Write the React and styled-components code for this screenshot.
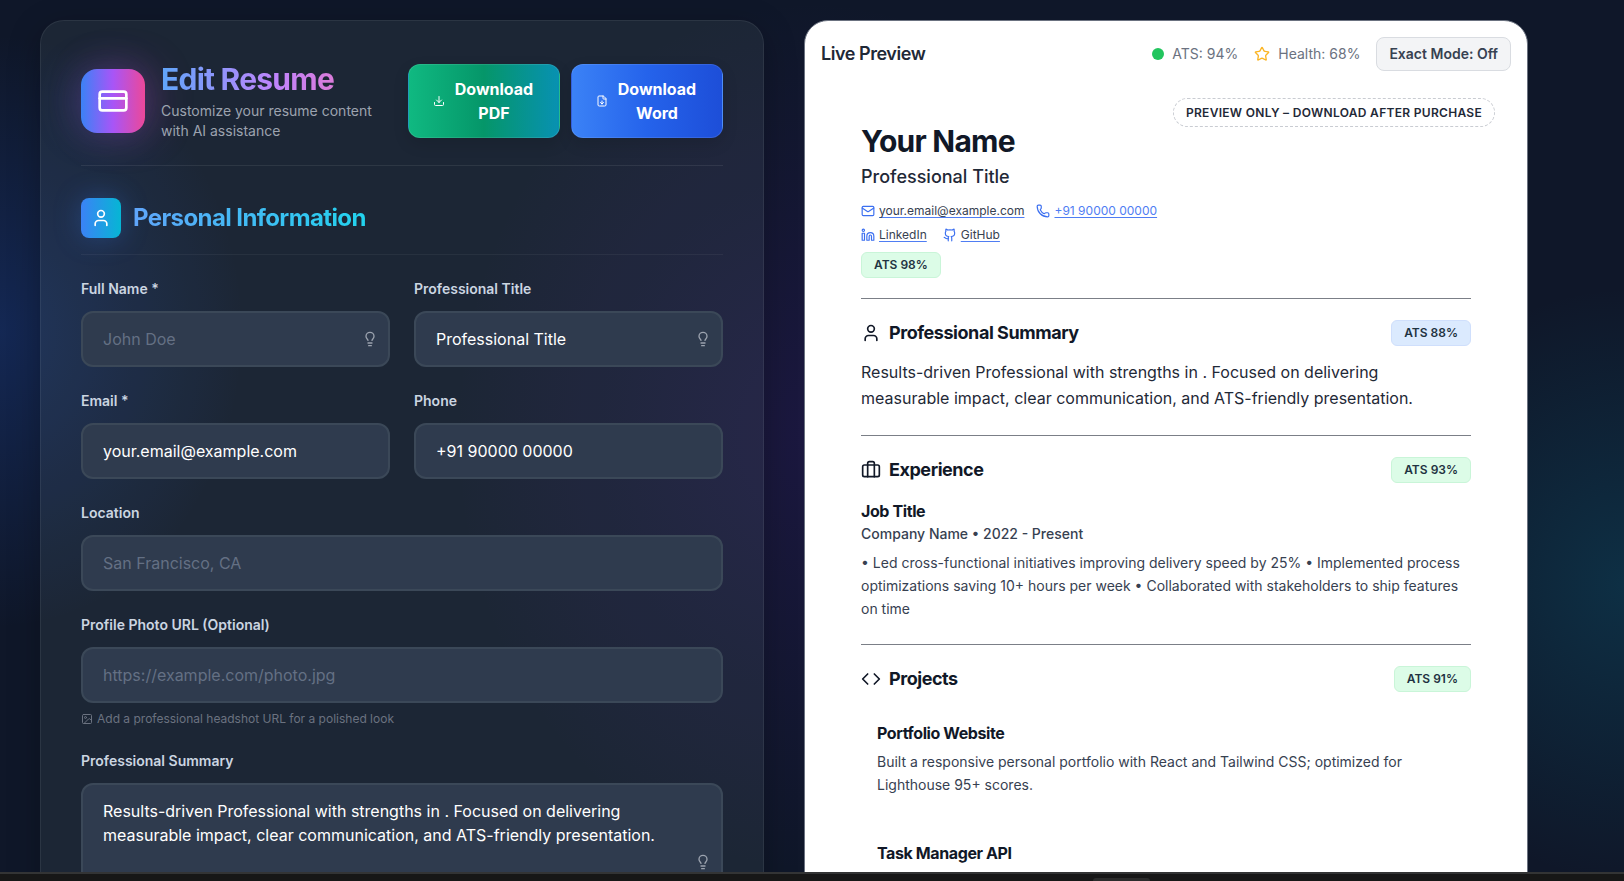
import React from 'react';
import styled, { createGlobalStyle, css } from 'styled-components';
import {
  Briefcase, Code, CreditCard, Download, FileDown, Github, Image, Lightbulb,
  Linkedin, Mail, Phone, Star, User,
} from 'lucide-react';

const GlobalStyle = createGlobalStyle`
  *, *::before, *::after { box-sizing: border-box; }
  body { margin: 0; background: #0f172a; font-family: Inter, "Liberation Sans", sans-serif; }
  h1, h2, h3, p { margin: 0; }
  button, input, textarea { font: inherit; }
  svg { flex: none; display: block; }
`;

const Shell = styled.div`
  display: flex;
  flex-direction: column;
  height: 100vh;
`;

const Page = styled.main`
  flex: 1;
  min-height: 0;
  overflow: hidden;
  display: grid;
  grid-template-columns: 1fr 1fr;
  gap: 40px;
  align-items: start;
  padding: 20px 96px 0 40px;
  background:
    radial-gradient(ellipse 15% 34% at 0% 38%, rgba(37, 99, 235, 0.22), transparent),
    radial-gradient(ellipse 22% 50% at 50% 50%, rgba(88, 28, 175, 0.17), transparent),
    radial-gradient(ellipse 16% 34% at 100% 67%, rgba(8, 145, 178, 0.2), transparent),
    #0f1729;
`;

const Dock = styled.footer`
  height: 9px;
  border-top: 2px solid #333435;
  background: #171717;
  display: flex;
  align-items: flex-end;
  padding-left: 1093px;
`;

const DockHandle = styled.span`
  width: 57px;
  height: 3px;
  border-radius: 4px 4px 0 0;
  background: #2b2b2b;
`;

const EditorCard = styled.section`
  padding: 40px;
  border: 1px solid rgba(255, 255, 255, 0.07);
  border-radius: 24px;
  background: rgba(145, 180, 165, 0.1);
  box-shadow: 0 8px 32px rgba(0, 0, 0, 0.25);
`;

const EditorHeader = styled.header`
  display: flex;
  align-items: center;
  gap: 16px;
  padding-bottom: 24px;
  margin-bottom: 32px;
  border-bottom: 1px solid rgba(255, 255, 255, 0.08);
`;

const IconTile = styled.div`
  flex: none;
  display: grid;
  place-items: center;
  color: #fff;
  ${(p) => (p.$large ? css`
    width: 64px;
    height: 64px;
    border-radius: 16px;
    background: linear-gradient(90deg, #3b82f6, #a855f7 50%, #ec4899);
    box-shadow: -8px 0 40px rgba(99, 102, 241, 0.2), 8px 0 40px rgba(217, 70, 200, 0.25);
  ` : css`
    width: 40px;
    height: 40px;
    border-radius: 8px;
    background: linear-gradient(90deg, #3b82f6, #06b6d4);
    box-shadow: 0 0 28px rgba(59, 130, 246, 0.3);
  `)}
`;

const HeaderText = styled.div`
  flex: 1;
  min-width: 0;
`;

const EditorTitle = styled.h1`
  margin-bottom: 4px;
  font-size: 30px;
  line-height: 36px;
  font-weight: 700;
  letter-spacing: -0.025em;
  color: transparent;
  background: linear-gradient(90deg, #60a5fa, #c084fc 50%, #f472b6);
  background-clip: text;
`;

const EditorSubtitle = styled.p`
  font-size: 14px;
  line-height: 20px;
  color: #9ca3af;
`;

const Actions = styled.div`
  display: flex;
  gap: 11px;
`;

const DownloadButton = styled.button`
  width: 152px;
  display: flex;
  align-items: center;
  gap: 8px;
  padding: 12px 24px;
  border: 1px solid rgba(255, 255, 255, 0.1);
  border-radius: 12px;
  color: #fff;
  font-size: 16px;
  line-height: 24px;
  font-weight: 700;
  background: linear-gradient(90deg, ${(p) => p.$stops});
  box-shadow: 0 6px 16px rgba(0, 0, 0, 0.12);
  span { flex: 1; }
`;

const SectionHeader = styled.div`
  display: flex;
  align-items: center;
  gap: 12px;
  padding-bottom: 16px;
  margin-bottom: 24px;
  border-bottom: 1px solid rgba(255, 255, 255, 0.05);
`;

const SectionTitle = styled.h2`
  font-size: 24px;
  line-height: 32px;
  font-weight: 700;
  letter-spacing: -0.025em;
  color: transparent;
  background: linear-gradient(90deg, #60a5fa, #22d3ee);
  background-clip: text;
`;

const Fields = styled.form`
  display: grid;
  grid-template-columns: 1fr 1fr;
  gap: 24px;
`;

const FieldBox = styled.div`
  grid-column: ${(p) => (p.$wide ? '1 / -1' : 'auto')};
`;

const Label = styled.label`
  display: block;
  margin-bottom: 12px;
  font-size: 14px;
  line-height: 20px;
  font-weight: 600;
  color: #cbd5e1;
`;

const ControlWrap = styled.div`
  position: relative;
`;

const control = css`
  display: block;
  width: 100%;
  padding: 14px 20px;
  border: 2px solid #3b4858;
  border-radius: 12px;
  background: #2f3b4e;
  color: #fff;
  font-size: 16px;
  line-height: 24px;
  outline: none;
  &::placeholder { color: #647084; opacity: 1; }
`;

const TextInput = styled.input`
  ${control}
  height: 56px;
`;

const TextArea = styled.textarea`
  ${control}
  height: 158px;
  resize: none;
`;

const HintButton = styled.button`
  position: absolute;
  top: 50%;
  right: 12px;
  transform: translateY(-50%);
  padding: 0;
  border: 0;
  background: none;
  color: #9ca3af;
`;

const FieldNote = styled.p`
  display: flex;
  align-items: center;
  gap: 4px;
  margin-top: 8px;
  font-size: 12px;
  line-height: 16px;
  color: #6b7280;
`;

const PreviewCard = styled.section`
  position: relative;
  border: 1px solid #6b7280;
  border-radius: 24px;
  background: #fff;
  color: #111827;
`;

const PreviewHeader = styled.header`
  display: flex;
  align-items: center;
  gap: 16px;
  padding: 16px;
`;

const PreviewTitle = styled.h2`
  flex: 1;
  font-size: 18px;
  line-height: 28px;
  font-weight: 600;
  letter-spacing: -0.025em;
  color: #1f2937;
`;

const Score = styled.span`
  display: flex;
  align-items: center;
  gap: 8px;
  font-size: 14px;
  line-height: 20px;
  color: #6b7280;
  svg { color: #fbb524; }
`;

const Dot = styled.span`
  width: 12px;
  height: 12px;
  border-radius: 50%;
  background: #22c55e;
`;

const ModeButton = styled.button`
  padding: 6px 12px;
  border: 1px solid #d9dce1;
  border-radius: 8px;
  background: #f3f4f6;
  color: #374151;
  font-size: 14px;
  line-height: 20px;
  font-weight: 600;
`;

const Watermark = styled.div`
  position: absolute;
  top: 77px;
  right: 32px;
  padding: 5px 12px;
  border: 1px dashed #c9ccd2;
  border-radius: 15px;
  background: #fff;
  color: #1f2937;
  font-size: 12px;
  line-height: 17px;
  font-weight: 600;
  letter-spacing: 0.025em;
`;

const Resume = styled.article`
  padding: 36px 56px 56px;
`;

const ResumeName = styled.h1`
  font-size: 30px;
  line-height: 36px;
  font-weight: 700;
  letter-spacing: -0.025em;
  color: #111827;
`;

const ResumeRole = styled.p`
  margin: 4px 0 10px;
  font-size: 18px;
  line-height: 28px;
  font-weight: 500;
  color: #1f2937;
`;

const Contacts = styled.div`
  display: flex;
  gap: ${(p) => p.$gap}px;
  margin-bottom: 4px;
`;

const ContactLink = styled.a`
  display: flex;
  align-items: center;
  gap: 4px;
  font-size: 12px;
  line-height: 20px;
  color: ${(p) => (p.$blue ? '#4f7df3' : '#374151')};
  text-decoration: underline;
  text-decoration-color: #4f7df3;
  text-underline-offset: 2px;
  svg { color: #3b6ff0; }
`;

const AtsBadge = styled.span`
  display: inline-block;
  padding: 4px 12px;
  border: 1px solid ${(p) => (p.$blue ? '#cfdffc' : '#c9f5d8')};
  border-radius: 6px;
  background: ${(p) => (p.$blue ? '#dbeafe' : '#dcfce7')};
  color: #1f3342;
  font-size: 12px;
  line-height: 16px;
  font-weight: 600;
`;

const ProfileScore = styled.div`
  padding-top: 3px;
`;

const ResumeSection = styled.section`
  margin-top: 20px;
  padding-top: 21px;
  border-top: 1px solid #7b7f87;
`;

const ResumeHeading = styled.div`
  display: flex;
  align-items: center;
  justify-content: space-between;
  height: 26px;
  h2 {
    display: flex;
    align-items: center;
    gap: 8px;
    font-size: 18px;
    line-height: 26px;
    font-weight: 700;
    letter-spacing: -0.025em;
  }
`;

const Summary = styled.p`
  margin: 13px 0 24px;
  font-size: 16px;
  line-height: 26px;
  color: #1f2937;
`;

const Entry = styled.div`
  padding: ${(p) => (p.$inset ? '16px' : '0')};
  margin: ${(p) => (p.$inset ? '13px 0 0' : '16px 0 24px')};
`;

const EntryTitle = styled.h3`
  margin-bottom: ${(p) => (p.$spaced ? '5px' : '0')};
  font-size: 16px;
  line-height: 24px;
  font-weight: 700;
  letter-spacing: -0.025em;
`;

const EntryMeta = styled.p`
  font-size: 14px;
  line-height: 22px;
  font-weight: 500;
  color: #374151;
  margin-bottom: 6px;
`;

const EntryText = styled.p`
  font-size: 14px;
  line-height: 23px;
  color: #374151;
`;

const SUMMARY = 'Results-driven Professional with strengths in . Focused on delivering measurable impact, clear communication, and ATS-friendly presentation.';

const FIELDS = [
  { id: 'fullName', label: 'Full Name *', placeholder: 'John Doe', hint: true },
  { id: 'title', label: 'Professional Title', value: 'Professional Title', hint: true },
  { id: 'email', label: 'Email *', value: 'your.email@example.com', type: 'email' },
  { id: 'phone', label: 'Phone', value: '+91 90000 00000', type: 'tel' },
  { id: 'location', label: 'Location', placeholder: 'San Francisco, CA', wide: true },
  {
    id: 'photo', label: 'Profile Photo URL (Optional)', placeholder: 'https://example.com/photo.jpg',
    wide: true, type: 'url', note: 'Add a professional headshot URL for a polished look',
  },
  { id: 'summary', label: 'Professional Summary', value: SUMMARY, wide: true, hint: true, multiline: true },
];

function Field({ id, label, placeholder, value, hint, wide, note, type = 'text', multiline }) {
  const Control = multiline ? TextArea : TextInput;
  return (
    <FieldBox $wide={wide}>
      <Label htmlFor={id}>{label}</Label>
      <ControlWrap>
        <Control id={id} type={multiline ? undefined : type} placeholder={placeholder} defaultValue={value} />
        {hint && (
          <HintButton type="button" aria-label={`Suggestions for ${label}`}>
            <Lightbulb size={16} strokeWidth={2} />
          </HintButton>
        )}
      </ControlWrap>
      {note && <FieldNote><Image size={12} />{note}</FieldNote>}
    </FieldBox>
  );
}

function PreviewSection({ icon: Icon, title, score, blue, children }) {
  return (
    <ResumeSection>
      <ResumeHeading>
        <h2><Icon size={20} />{title}</h2>
        <AtsBadge $blue={blue}>ATS {score}%</AtsBadge>
      </ResumeHeading>
      {children}
    </ResumeSection>
  );
}

export default function App() {
  return (
    <Shell>
      <GlobalStyle />
      <Page>
        <EditorCard>
          <EditorHeader>
            <IconTile $large><CreditCard size={32} /></IconTile>
            <HeaderText>
              <EditorTitle>Edit Resume</EditorTitle>
              <EditorSubtitle>Customize your resume content with AI assistance</EditorSubtitle>
            </HeaderText>
            <Actions>
              <DownloadButton type="button" $stops="#10b981, #059669 50%, #0891b2">
                <Download size={12} /><span>Download PDF</span>
              </DownloadButton>
              <DownloadButton type="button" $stops="#3b82f6, #2563eb 50%, #1d4ed8">
                <FileDown size={12} /><span>Download Word</span>
              </DownloadButton>
            </Actions>
          </EditorHeader>
          <SectionHeader>
            <IconTile><User size={20} /></IconTile>
            <SectionTitle>Personal Information</SectionTitle>
          </SectionHeader>
          <Fields>
            {FIELDS.map((f) => <Field key={f.id} {...f} />)}
          </Fields>
        </EditorCard>

        <PreviewCard>
          <PreviewHeader>
            <PreviewTitle>Live Preview</PreviewTitle>
            <Score><Dot />ATS: 94%</Score>
            <Score><Star size={16} />Health: 68%</Score>
            <ModeButton type="button">Exact Mode: Off</ModeButton>
          </PreviewHeader>
          <Watermark>PREVIEW ONLY – DOWNLOAD AFTER PURCHASE</Watermark>
          <Resume>
            <ResumeName>Your Name</ResumeName>
            <ResumeRole>Professional Title</ResumeRole>
            <Contacts $gap={12}>
              <ContactLink href="mailto:your.email@example.com"><Mail size={14} />your.email@example.com</ContactLink>
              <ContactLink href="tel:+919000000000" $blue><Phone size={14} />+91 90000 00000</ContactLink>
            </Contacts>
            <Contacts $gap={16}>
              <ContactLink href="#linkedin"><Linkedin size={14} />LinkedIn</ContactLink>
              <ContactLink href="#github"><Github size={14} />GitHub</ContactLink>
            </Contacts>
            <ProfileScore><AtsBadge>ATS 98%</AtsBadge></ProfileScore>

            <PreviewSection icon={User} title="Professional Summary" score={88} blue>
              <Summary>{SUMMARY}</Summary>
            </PreviewSection>

            <PreviewSection icon={Briefcase} title="Experience" score={93}>
              <Entry>
                <EntryTitle>Job Title</EntryTitle>
                <EntryMeta>Company Name • 2022 - Present</EntryMeta>
                <EntryText>
                  • Led cross-functional initiatives improving delivery speed by 25% • Implemented process
                  optimizations saving 10+ hours per week • Collaborated with stakeholders to ship features on time
                </EntryText>
              </Entry>
            </PreviewSection>

            <PreviewSection icon={Code} title="Projects" score={91}>
              <Entry $inset>
                <EntryTitle $spaced>Portfolio Website</EntryTitle>
                <EntryText>
                  Built a responsive personal portfolio with React and Tailwind CSS; optimized for Lighthouse 95+ scores.
                </EntryText>
              </Entry>
              <Entry $inset>
                <EntryTitle $spaced>Task Manager API</EntryTitle>
              </Entry>
            </PreviewSection>
          </Resume>
        </PreviewCard>
      </Page>
      <Dock><DockHandle /></Dock>
    </Shell>
  );
}
